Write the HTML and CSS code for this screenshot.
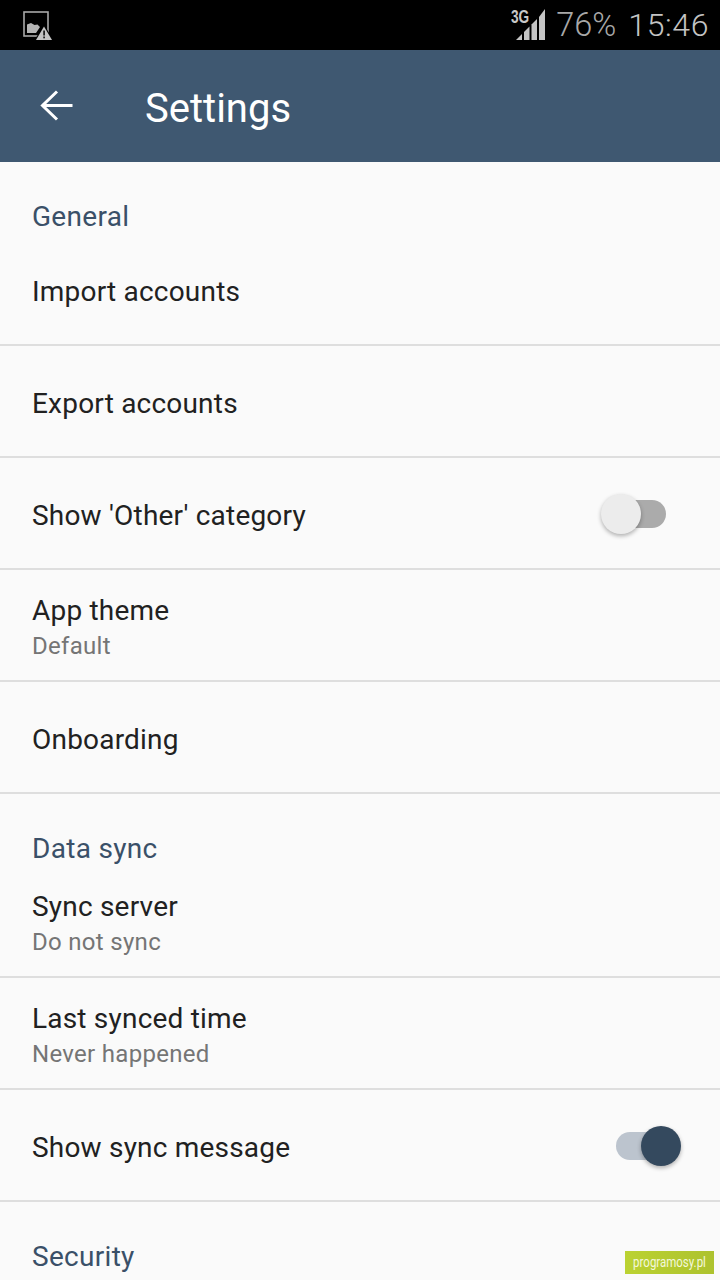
FILE: index.html
```html
<!DOCTYPE html>
<html lang="en">
<head>
<meta charset="utf-8">
<title>Settings</title>
<link rel="stylesheet" href="styles.css">
</head>
<body>
<div class="screen">
  <header class="status">
    <svg class="notif" width="32" height="32" viewBox="0 0 32 32">
      <rect x="2" y="3" width="24" height="24" fill="none" stroke="#a8a8a8" stroke-width="1.6"/>
      <path d="M5 24V15.5L9 14L12.5 16L15.5 15.5L18 18L14 24Z" fill="#b4b4b4"/>
      <path d="M22 15.5L32 32H12Z" fill="#000"/>
      <path d="M22 17.5L30 31H14Z" fill="#c4c4c4"/>
      <rect x="21.2" y="21.5" width="1.8" height="5" fill="#222"/>
      <rect x="21.2" y="27.5" width="1.8" height="1.8" fill="#222"/>
    </svg>
    <div class="status-right">
      <div class="signal">
        <span class="net">3G</span>
        <svg width="30" height="32" viewBox="0 0 30 32">
          <path d="M0 31L6 25V31Z" fill="#c4c4c4"/>
          <path d="M8 23L13.500 17.500V31H8Z" fill="#c4c4c4"/>
          <path d="M15.500 15.500L21 10V31H15.500Z" fill="#c4c4c4"/>
          <path d="M23 8L29 0V31H23Z" fill="#c4c4c4"/>
        </svg>
      </div>
      <span class="batt">76%</span>
      <span class="clock">15:46</span>
    </div>
  </header>
  <div class="appbar">
    <svg class="back" width="36" height="36" viewBox="0 0 36 36">
      <path d="M33.500 17.500H4M18 3.500L3.500 17.500L18 31.500" fill="none" stroke="#fff" stroke-width="3"/>
    </svg>
    <h1 class="title">Settings</h1>
  </div>
  <main class="list">
    <div class="category">General</div>
    <div class="row"><div class="label">Import accounts</div></div>
    <div class="row"><div class="label">Export accounts</div></div>
    <div class="row">
      <div class="label">Show 'Other' category</div>
      <div class="switch off"><span class="track"></span><span class="thumb"></span></div>
    </div>
    <div class="row"><div class="label">App theme</div><div class="sub">Default</div></div>
    <div class="row"><div class="label">Onboarding</div></div>
    <div class="category">Data sync</div>
    <div class="row"><div class="label">Sync server</div><div class="sub">Do not sync</div></div>
    <div class="row"><div class="label">Last synced time</div><div class="sub">Never happened</div></div>
    <div class="row">
      <div class="label">Show sync message</div>
      <div class="switch on"><span class="track"></span><span class="thumb"></span></div>
    </div>
    <div class="category">Security</div>
  </main>
  <div class="watermark"><span class="wm-text">programosy.pl</span></div>
</div>
</body>
</html>
```
FILE: styles.css
```css
* { box-sizing: border-box; }
html, body { margin: 0; padding: 0; }
body { font-family: Roboto, "Noto Sans", sans-serif; background: #fafafa; }
.screen { position: relative; width: 720px; height: 1280px; overflow: hidden; background: #fafafa; display: flex; flex-direction: column; }
.status { height: 50px; flex: none; background: #000; display: flex; align-items: center; justify-content: space-between; padding: 0 11px 0 22px; color: #c2c2c2; }
.notif { display: block; }
.status-right { display: flex; align-items: center; }
.signal { position: relative; width: 36px; height: 32px; margin-right: 10px; }
.signal svg { position: absolute; left: 6px; top: 0; }
.net { position: absolute; left: 1px; top: -1px; font: 700 19px/18px "Liberation Sans", sans-serif; color: #c8c8c8; transform: scaleX(.72); transform-origin: left; }
.batt { font-size: 32.5px; line-height: 50px; font-weight: 300; color: #a8a8a8; margin-right: 12px; }
.clock { font-size: 32px; line-height: 50px; font-weight: 300; color: #c4c4c4; letter-spacing: .6px; }
.appbar { height: 112px; flex: none; background: #3f5871; display: flex; align-items: center; padding-left: 39px; color: #fff; }
.back { display: block; margin-bottom: 0; }
.title { margin: 0 0 0 70px; padding-top: 6px; font-size: 40px; font-weight: 400; line-height: 106px; }
.list { flex: 1; }
.category { height: 72px; padding: 37px 32px 0; font-size: 28px; line-height: 36px; color: #3a5068; letter-spacing: .3px; }
.row { position: relative; height: 112px; border-bottom: 2px solid #dedede; padding: 5px 32px 0; display: flex; flex-direction: column; justify-content: center; }
.label { font-size: 28px; line-height: 36px; color: #212121; letter-spacing: .2px; }
.sub { font-size: 24px; line-height: 34px; color: #757575; letter-spacing: .3px; }
.switch { position: absolute; top: 50%; width: 82px; height: 40px; margin-top: -19px; }
.switch.off { left: 600px; }
.switch.on { left: 600px; }
.track { position: absolute; top: 6px; height: 28px; width: 50px; left: 16px; border-radius: 14px; }
.off .track { background: #ababab; }
.on .track { background: #bcc4ce; }
.thumb { position: absolute; top: 0; width: 40px; height: 40px; border-radius: 50%; box-shadow: 0 2px 4px rgba(0,0,0,.3); }
.off .thumb { left: 1px; background: #ececec; }
.on .thumb { left: 41px; background: #34495e; }
.watermark { position: absolute; left: 625px; top: 1251px; width: 89px; height: 23px; background: linear-gradient(90deg, #bbd232, #adc22e); color: #f4f8dc; font: 14px/23px Roboto, sans-serif; text-align: center; white-space: nowrap; }
.wm-text { display: inline-block; width: 89px; transform: scaleX(.82); transform-origin: center; }
```
